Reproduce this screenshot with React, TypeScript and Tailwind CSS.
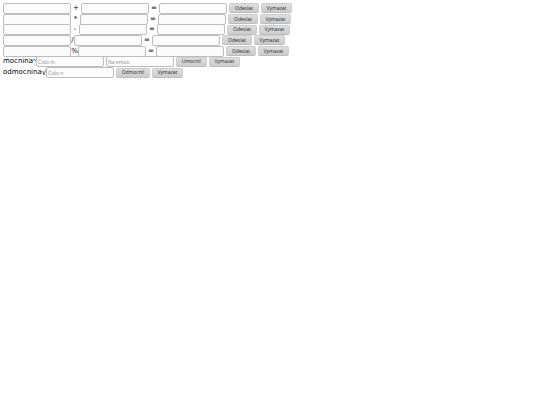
import React from 'react';

interface Operation {
  symbol: string;
  name: string;
  symbolClass: string;
}

const operations: Operation[] = [
  { symbol: '+', name: 'Součet', symbolClass: 'w-[10px]' },
  { symbol: '*', name: 'Součin', symbolClass: 'w-[9px] pt-px' },
  { symbol: '-', name: 'Rozdíl', symbolClass: 'w-[8px]' },
  { symbol: '/', name: 'Podíl', symbolClass: 'w-[3px]' },
  { symbol: '%', name: 'Zbytek', symbolClass: 'w-[7px]' },
];

const Field = ({ label, ...props }: { label: string; id?: string; placeholder?: string }) => (
  <input
    type="text"
    aria-label={label}
    className="h-[11px] w-[68px] shrink-0 rounded-[2px] border border-[#bdbdbd] bg-[#fbfbfb] px-px font-['Open_Sans',sans-serif] text-[5px] leading-none text-[#555] placeholder:text-[#8f8f8f]"
    {...props}
  />
);

const Button = ({ type, className, children }: { type: 'submit' | 'reset'; className: string; children: React.ReactNode }) => (
  <button
    type={type}
    className={`h-[10px] shrink-0 rounded-[2px] border border-[#cdcdcd] border-b-[#bcbcbc] bg-linear-to-b from-[#dedede] to-[#cccccc] text-center font-['Open_Sans',sans-serif] text-[5px] leading-none text-[#222] ${className}`}
  >
    {children}
  </button>
);

const rowClass = 'flex items-center whitespace-nowrap';

const App = () => {
  const handleSubmit = (event: React.FormEvent) => event.preventDefault();

  return (
    <main className="mt-[3px] grid h-[75px] grid-rows-7 bg-white pl-[3px] font-['DejaVu_Sans',sans-serif] text-[7px] leading-none text-black">
      {operations.map(({ symbol, name, symbolClass }) => (
        <form key={symbol} onSubmit={handleSubmit} className={rowClass}>
          <Field label={`${name}: první číslo`} />
          <span className={`flex shrink-0 justify-center ${symbolClass}`}>{symbol}</span>
          <Field label={`${name}: druhé číslo`} />
          <span className="w-[10px] shrink-0 text-center">=</span>
          <Field label={`${name}: výsledek`} />
          <Button type="submit" className="ml-[2px] w-[30px]">Odeslat</Button>
          <Button type="reset" className="ml-[2px] w-[31px]">Vymazat</Button>
        </form>
      ))}

      <form onSubmit={handleSubmit} className={rowClass}>
        <label htmlFor="zaklad" className="flex w-[33px] shrink-0 items-start">
          mocnina
          <sup className="top-0 font-['Liberation_Sans',sans-serif] text-[6px] leading-none">^</sup>
        </label>
        <Field id="zaklad" label="mocnina" placeholder="Číslo m" />
        <span className="w-[2px] shrink-0" />
        <Field label="exponent" placeholder="Na entou" />
        <Button type="submit" className="ml-[2px] w-[31px]">Umocni!</Button>
        <Button type="reset" className="ml-[2px] w-[31px]">Vymazat</Button>
      </form>

      <form onSubmit={handleSubmit} className={rowClass}>
        <label htmlFor="odmocnina" className="flex w-[43px] shrink-0 items-center">
          odmocnina
          <span className="text-[8px] leading-none">√</span>
        </label>
        <Field id="odmocnina" label="odmocnina" placeholder="Číslo n" />
        <Button type="submit" className="ml-[2px] w-[34px]">Odmocni!</Button>
        <Button type="reset" className="ml-[2px] w-[31px]">Vymazat</Button>
      </form>
    </main>
  );
};

export default App;
